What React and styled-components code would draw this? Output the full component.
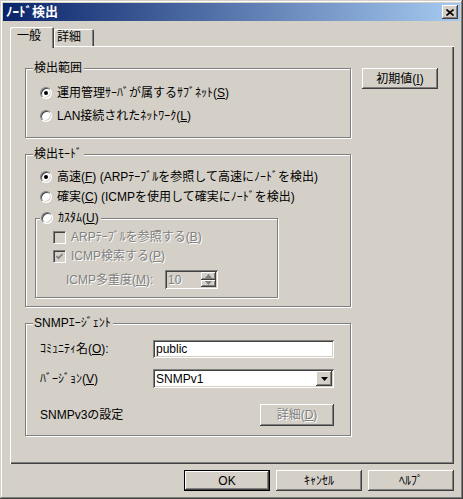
import React from "react";
import styled, { createGlobalStyle } from "styled-components";

const GlobalStyle = createGlobalStyle`
  body {
    margin: 0;
    background: #d4d0c8;
    font-family: "Liberation Sans", "Noto Sans CJK JP", sans-serif;
    font-size: 12px;
    color: #000;
  }
`;

const raised = `
  box-shadow: inset -1px -1px #404040, inset 1px 1px #ffffff,
    inset -2px -2px #808080, inset 2px 2px #d4d0c8;
`;

const Window = styled.div`
  width: 463px;
  height: 499px;
  box-sizing: border-box;
  padding: 3px;
  background: #d4d0c8;
  box-shadow: inset -1px -1px #404040, inset 1px 1px #d4d0c8,
    inset -2px -2px #808080, inset 2px 2px #ffffff;
  display: flex;
  flex-direction: column;
`;

const TitleBar = styled.div`
  height: 18px;
  flex: none;
  display: flex;
  align-items: center;
  justify-content: space-between;
  padding: 0 2px 0 3px;
  background: linear-gradient(to right, #0a246a, #a6caf0);
  span {
    color: #fff;
    font-weight: 700;
    font-size: 13px;
    line-height: 14px;
  }
`;

const CloseButton = styled.div`
  width: 16px;
  height: 14px;
  background: #d4d0c8;
  display: flex;
  align-items: center;
  justify-content: center;
  box-shadow: inset -1px -1px #404040, inset 1px 1px #ffffff,
    inset -2px -2px #808080;
`;

const Body = styled.div`
  padding: 6px 0 0 7px;
  display: flex;
  flex-direction: column;
`;

const TabStrip = styled.div`
  height: 19px;
  display: flex;
  align-items: flex-end;
`;

const Tab = styled.div`
  position: relative;
  z-index: ${(p) => (p.$active ? 2 : 1)};
  box-sizing: border-box;
  width: ${(p) => (p.$active ? "44px" : "40px")};
  height: ${(p) => (p.$active ? "21px" : "17px")};
  margin-bottom: ${(p) => (p.$active ? "-2px" : "0")};
  padding: ${(p) => (p.$active ? "2px 0 0 7px" : "1px 0 0 3px")};
  line-height: 14px;
  background: #d4d0c8;
  border-radius: 2px 2px 0 0;
  box-shadow: inset 1px 1px #ffffff, inset -1px 0 #404040, inset -2px 0 #808080;
`;

const Panel = styled.div`
  width: 444px;
  height: 418px;
  box-sizing: border-box;
  background: #d4d0c8;
  box-shadow: inset 1px 1px #ffffff, inset -1px -1px #404040,
    inset -2px -2px #808080;
  padding: 15px 0 0 15px;
  display: flex;
  align-items: flex-start;
`;

const Column = styled.div`
  width: 326px;
  display: flex;
  flex-direction: column;
`;

const Group = styled.fieldset`
  margin: ${(p) => p.$mt || 0}px 0 0 ${(p) => p.$ml || 0}px;
  padding: 0;
  min-width: 0;
  width: ${(p) => p.$width || 326}px;
  box-sizing: border-box;
  border: 1px solid #808080;
  box-shadow: inset 1px 1px #ffffff, 1px 1px #ffffff;
`;

const Legend = styled.legend`
  margin-left: ${(p) => p.$ml ?? 7}px;
  padding: 0 2px 0 1px;
  line-height: ${(p) => p.$lh || 14}px;
  background: #d4d0c8;
  display: flex;
  align-items: center;
  gap: 5px;
`;

const GroupBody = styled.div`
  display: flex;
  flex-direction: column;
  padding: ${(p) => p.$pad};
`;

const Row = styled.div`
  height: ${(p) => p.$h || 16}px;
  margin-top: ${(p) => p.$mt || 0}px;
  margin-left: ${(p) => p.$ml || 0}px;
  display: flex;
  align-items: center;
  gap: ${(p) => p.$gap ?? 5}px;
  line-height: 14px;
  white-space: nowrap;
  color: ${(p) => (p.$disabled ? "#808080" : "#000")};
  text-shadow: ${(p) => (p.$disabled ? "1px 1px #ffffff" : "none")};
`;

const U = styled.u`
  text-decoration: underline;
  text-underline-offset: 1px;
`;

const RadioCircle = styled.span`
  width: 12px;
  height: 12px;
  flex: none;
  box-sizing: border-box;
  border-radius: 50%;
  border: 1px solid;
  border-color: #808080 #ffffff #ffffff #808080;
  background: #fff;
  box-shadow: inset 1px 1px #404040, inset -1px -1px #d4d0c8;
  display: flex;
  align-items: center;
  justify-content: center;
  &::after {
    content: "";
    width: 4px;
    height: 4px;
    border-radius: 50%;
    background: #000;
    display: ${(p) => (p.$checked ? "block" : "none")};
  }
`;

const CheckBox = styled.span`
  width: 13px;
  height: 13px;
  flex: none;
  box-sizing: border-box;
  border: 1px solid;
  border-color: #808080 #ffffff #ffffff #808080;
  background: #d4d0c8;
  box-shadow: inset 1px 1px #404040, inset -1px -1px #d4d0c8;
  display: flex;
  align-items: center;
  justify-content: center;
`;

const Label = styled.span`
  width: ${(p) => p.$w}px;
  flex: none;
`;

const Sunken = styled.div`
  box-sizing: border-box;
  width: ${(p) => p.$w}px;
  height: ${(p) => p.$h}px;
  background: ${(p) => (p.$disabled ? "#d4d0c8" : "#ffffff")};
  box-shadow: inset 1px 1px #808080, inset -1px -1px #ffffff,
    inset 2px 2px #404040, inset -2px -2px #d4d0c8;
  padding: 0 2px 0 3px;
  display: flex;
  align-items: center;
  justify-content: space-between;
  line-height: 14px;
  color: ${(p) => (p.$disabled ? "#808080" : "#000")};
`;

const SpinButtons = styled.div`
  display: flex;
  flex-direction: column;
  width: 15px;
  height: 15px;
`;

const SpinPart = styled.div`
  flex: 1;
  background: #d4d0c8;
  ${raised}
  display: flex;
  align-items: center;
  justify-content: center;
`;

const DropButton = styled.div`
  width: 16px;
  height: 15px;
  background: #d4d0c8;
  ${raised}
  display: flex;
  align-items: center;
  justify-content: center;
`;

const Button = styled.div`
  box-sizing: border-box;
  width: ${(p) => p.$w}px;
  height: ${(p) => p.$h || 21}px;
  margin: ${(p) => p.$margin || 0};
  flex: none;
  background: #d4d0c8;
  display: flex;
  align-items: center;
  justify-content: center;
  line-height: 14px;
  color: ${(p) => (p.$disabled ? "#808080" : "#000")};
  text-shadow: ${(p) => (p.$disabled ? "1px 1px #ffffff" : "none")};
  ${raised}
  ${(p) =>
    p.$default &&
    `border: 1px solid #000;
     box-shadow: inset -1px -1px #404040, inset 1px 1px #ffffff, inset -2px -2px #808080;`}
`;

const ButtonRow = styled.div`
  width: 444px;
  margin-top: 6px;
  display: flex;
  justify-content: flex-end;
  gap: 6px;
`;

const Arrow = ({ up, color = "#000" }) => (
  <svg width="7" height="4" viewBox="0 0 7 4">
    <path d={up ? "M3.5 0 L7 4 L0 4 Z" : "M0 0 L7 0 L3.5 4 Z"} fill={color} />
  </svg>
);

const Radio = ({ checked, children, ...rest }) => (
  <Row {...rest}>
    <RadioCircle $checked={checked} />
    <span>{children}</span>
  </Row>
);

export default function App() {
  return (
    <>
      <GlobalStyle />
      <Window>
        <TitleBar>
          <span>ﾉｰﾄﾞ検出</span>
          <CloseButton>
            <svg width="8" height="7" viewBox="0 0 8 7">
              <path d="M0.5 0.5 L7.5 6.5 M7.5 0.5 L0.5 6.5" stroke="#000" strokeWidth="1.6" />
            </svg>
          </CloseButton>
        </TitleBar>
        <Body>
          <TabStrip>
            <Tab $active>一般</Tab>
            <Tab>詳細</Tab>
          </TabStrip>
          <Panel>
            <Column>
              <Group>
                <Legend>検出範囲</Legend>
                <GroupBody $pad="10px 0 13px 14px">
                  <Radio checked>
                    運用管理ｻｰﾊﾞが属するｻﾌﾞﾈｯﾄ(<U>S</U>)
                  </Radio>
                  <Radio $mt={7}>
                    LAN接続されたﾈｯﾄﾜｰｸ(<U>L</U>)
                  </Radio>
                </GroupBody>
              </Group>

              <Group $mt={9}>
                <Legend>検出ﾓｰﾄﾞ</Legend>
                <GroupBody $pad="8px 0 8px 0">
                  <Radio checked $ml={14}>
                    高速(<U>F</U>) (ARPﾃｰﾌﾞﾙを参照して高速にﾉｰﾄﾞを検出)
                  </Radio>
                  <Radio $ml={14} $mt={4}>
                    確実(<U>C</U>) (ICMPを使用して確実にﾉｰﾄﾞを検出)
                  </Radio>
                  <Group $mt={5} $ml={9} $width={243}>
                    <Legend $ml={4} $lh={16}>
                      <RadioCircle />
                      <span>
                        ｶｽﾀﾑ(<U>U</U>)
                      </span>
                    </Legend>
                    <GroupBody $pad="3px 0 8px 17px">
                      <Row $disabled>
                        <CheckBox />
                        <span>
                          ARPﾃｰﾌﾞﾙを参照する(<U>B</U>)
                        </span>
                      </Row>
                      <Row $disabled $mt={3}>
                        <CheckBox>
                          <svg width="7" height="7" viewBox="0 0 7 7">
                            <path d="M0.5 3 L2.5 5.2 L6.5 1" stroke="#808080" strokeWidth="1.8" fill="none" />
                          </svg>
                        </CheckBox>
                        <span>
                          ICMP検索する(<U>P</U>)
                        </span>
                      </Row>
                      <Row $disabled $mt={6} $h={19} $ml={13} $gap={0}>
                        <Label $w={99}>
                          ICMP多重度(<U>M</U>):
                        </Label>
                        <Sunken $w={53} $h={19} $disabled>
                          <span>10</span>
                          <SpinButtons>
                            <SpinPart>
                              <Arrow up color="#808080" />
                            </SpinPart>
                            <SpinPart>
                              <Arrow color="#808080" />
                            </SpinPart>
                          </SpinButtons>
                        </Sunken>
                      </Row>
                    </GroupBody>
                  </Group>
                </GroupBody>
              </Group>

              <Group $mt={9}>
                <Legend>SNMPｴｰｼﾞｪﾝﾄ</Legend>
                <GroupBody $pad="10px 0 9px 14px">
                  <Row $h={18} $gap={0}>
                    <Label $w={113}>
                      ｺﾐｭﾆﾃｨ名(<U>O</U>):
                    </Label>
                    <Sunken $w={181} $h={18}>
                      <span>public</span>
                    </Sunken>
                  </Row>
                  <Row $h={19} $mt={11} $gap={0}>
                    <Label $w={113}>
                      ﾊﾞｰｼﾞｮﾝ(<U>V</U>)
                    </Label>
                    <Sunken $w={181} $h={19}>
                      <span>SNMPv1</span>
                      <DropButton>
                        <Arrow />
                      </DropButton>
                    </Sunken>
                  </Row>
                  <Row $h={22} $mt={16} $gap={0}>
                    <Label $w={220}>SNMPv3の設定</Label>
                    <Button $w={74} $h={22} $disabled>
                      詳細(<U>D</U>)
                    </Button>
                  </Row>
                </GroupBody>
              </Group>
            </Column>
            <Button $w={76} $margin="7px 0 0 11px">
              初期値(<U>I</U>)
            </Button>
          </Panel>
          <ButtonRow>
            <Button $w={86} $default>
              OK
            </Button>
            <Button $w={86}>ｷｬﾝｾﾙ</Button>
            <Button $w={86}>ﾍﾙﾌﾟ</Button>
          </ButtonRow>
        </Body>
      </Window>
    </>
  );
}
